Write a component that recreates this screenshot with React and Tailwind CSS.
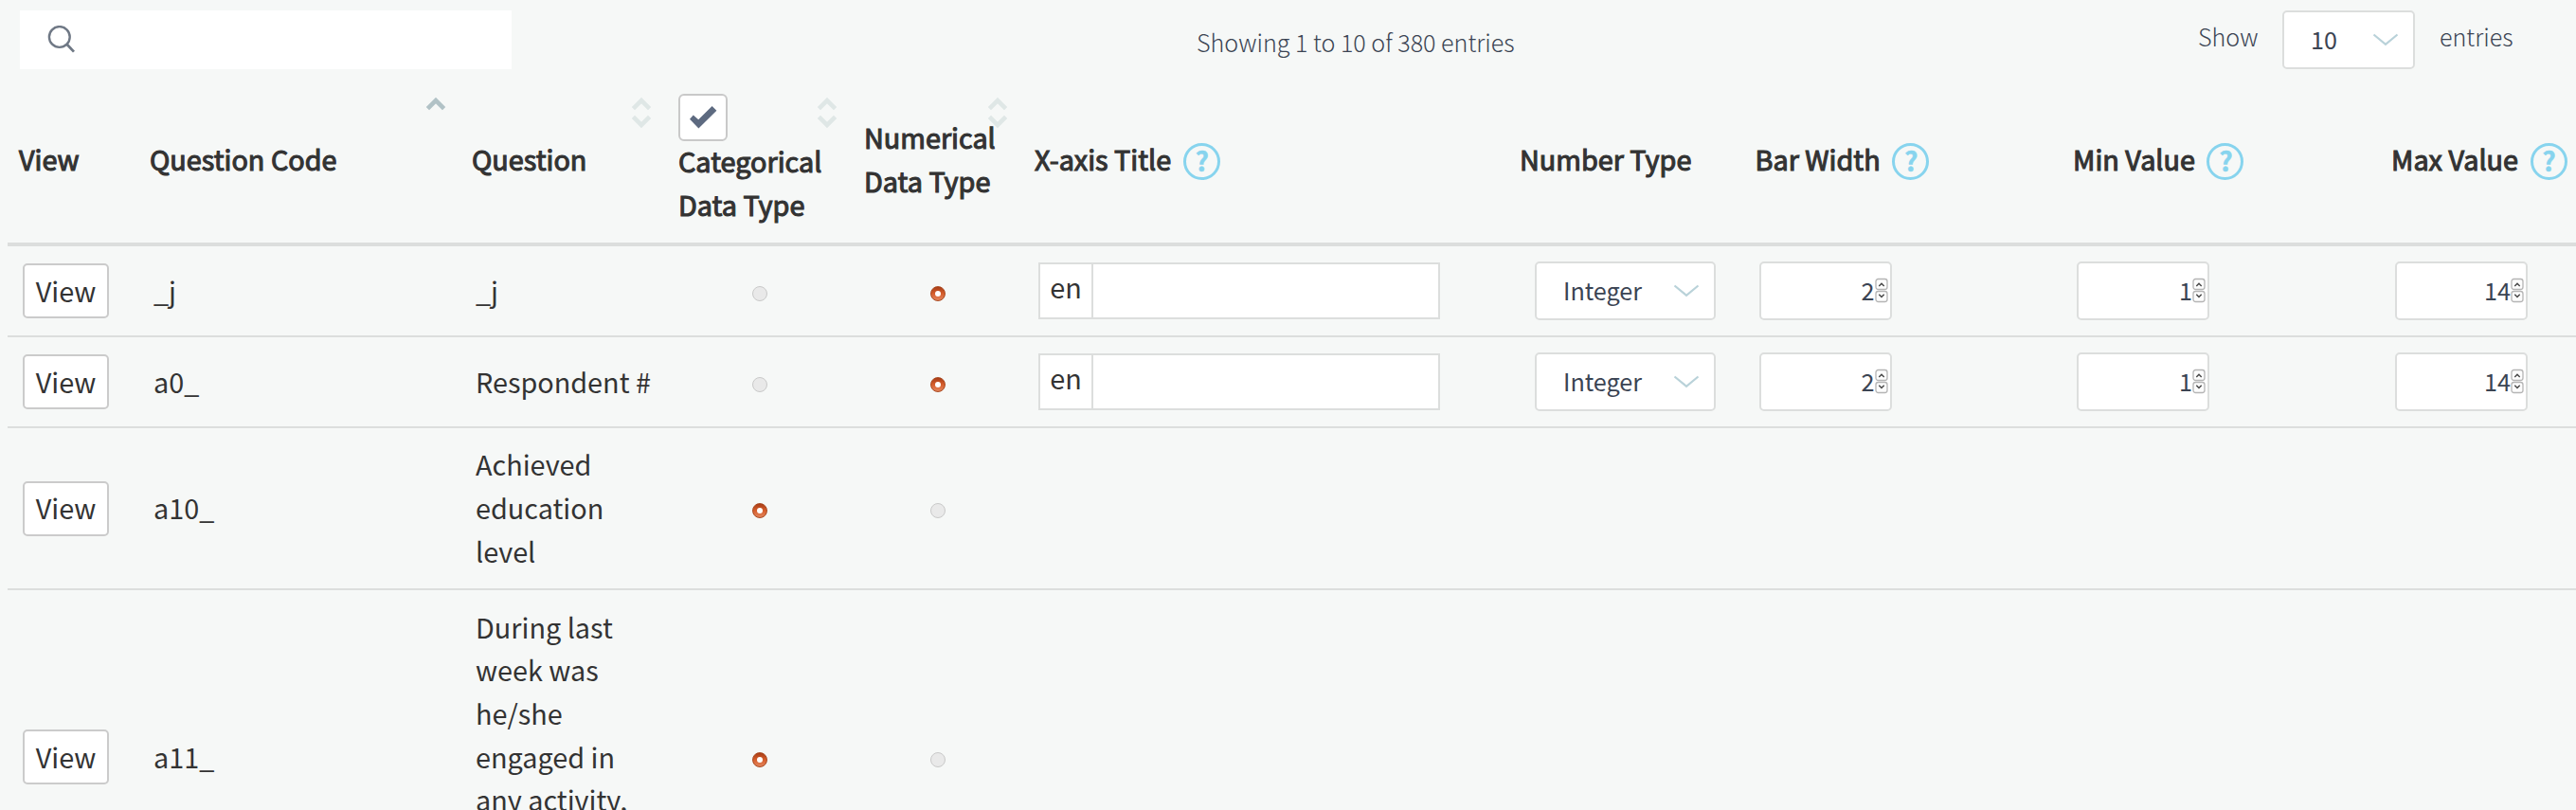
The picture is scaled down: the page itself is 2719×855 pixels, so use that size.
const COLUMNS =
  "grid grid-cols-[138px_340px_218px_196px_180px_512px_248.5px_335.5px_336px_207px] w-[2711px]";

function SortIcon({ direction }) {
  return (
    <svg
      className={
        direction === "asc"
          ? "absolute top-[19px] right-[15px] text-[#b1c2c6]"
          : "absolute top-[19px] right-4 text-[#dfe7e6]"
      }
      width="22"
      height="34"
      viewBox="0 0 22 34"
      fill="none"
      stroke="currentColor"
      strokeWidth="4.6"
    >
      <path d="M2.4 12.6 11 4 19.6 12.6" />
      {direction !== "asc" && <path d="M2.4 21.4 11 30 19.6 21.4" />}
    </svg>
  );
}

function HelpIcon() {
  return (
    <span className="mt-[2px] ml-[12.5px] flex size-[39px] shrink-0 items-center justify-center rounded-full border-3 border-[#87d4ee] pb-[3px] pl-px text-[28px] leading-none font-bold text-[#87d4ee] [-webkit-text-stroke:0.5px_#87d4ee]">
      ?
    </span>
  );
}

function Chevron() {
  return (
    <svg width="28" height="14" viewBox="0 0 28 14" fill="none" stroke="#b9d2d9" strokeWidth="2.2">
      <path d="M1.5 1.5 14 11.8 26.5 1.5" />
    </svg>
  );
}

function HeaderCell({ label, sort, help, children }) {
  return (
    <div className="relative flex items-center pl-3">
      {children}
      {label && <span className="pb-[3px] whitespace-nowrap">{label}</span>}
      {help && <HelpIcon />}
      {sort && <SortIcon direction={sort} />}
    </div>
  );
}

function Radio({ checked }) {
  return (
    <div className="flex items-center justify-center pt-[5px]">
      {checked ? (
        <span className="flex size-4 items-center justify-center rounded-full border border-[#a9481f] bg-linear-to-b from-[#a93d16] via-[#d75f2c] to-[#e2855c]">
          <span className="size-[6px] rounded-full bg-white" />
        </span>
      ) : (
        <span className="size-4 rounded-full border border-[#c9c9c9] bg-[#e9e9e9]" />
      )}
    </div>
  );
}

function Spinner() {
  return (
    <svg width="14" height="28" viewBox="0 0 14 28" fill="#fcfcfc" stroke="#b5b5b5">
      <rect x="1" y="1.5" width="12" height="11" rx="2.5" strokeWidth="1.3" />
      <rect x="1" y="14.5" width="12" height="11" rx="2.5" strokeWidth="1.3" />
      <path d="M4.3 9 7 6.3 9.7 9M4.3 17.8 7 20.5 9.7 17.8" fill="none" stroke="#444" strokeWidth="1.4" />
    </svg>
  );
}

function NumberInput({ value }) {
  return (
    <div className="flex items-center pl-4">
      <div className="flex h-[62px] w-[140px] items-center justify-end rounded-[5px] border-2 border-[#dcdedd] bg-white pr-[2px] text-[25.2px] text-[#3b4453]">
        <span className="pb-px">{value}</span>
        <Spinner />
      </div>
    </div>
  );
}

const ROWS = [
  { code: "_j", question: "_j", numeric: true, height: "h-24" },
  { code: "a0_", question: "Respondent #", numeric: true, height: "h-24" },
  { code: "a10_", question: ["Achieved", "education", "level"], height: "h-[171px]" },
  {
    code: "a11_",
    question: ["During last", "week was", "he/she", "engaged in", "any activity,"],
    height: "h-[354px]",
    tall: true,
  },
];

function Row({ row }) {
  const lines = Array.isArray(row.question) ? row.question : [row.question];
  return (
    <div className={`${COLUMNS} ${row.height} shrink-0 border-b-2 border-[#dcdedd]`}>
      <div className="flex items-center pl-4">
        <button className="flex h-[58px] w-[91px] items-center justify-center rounded-[5px] border-2 border-[#cbcbcb] bg-white pb-px">
          View
        </button>
      </div>
      <div className="flex items-center pb-px pl-4">{row.code}</div>
      <div className="flex items-center pb-px pl-4">
        <div className={row.tall ? "h-80" : ""}>
          {lines.map((line) => (
            <div key={line} className="whitespace-nowrap">
              {line}
            </div>
          ))}
        </div>
      </div>
      <Radio checked={!row.numeric} />
      <Radio checked={row.numeric} />
      {row.numeric && (
        <>
          <div className="flex items-center pl-4">
            <div className="flex h-[60px] w-[424px] border-2 border-[#dcdedd] bg-white">
              <span className="flex w-14 items-center justify-center border-r-2 border-[#dcdedd] pb-[9px]">
                en
              </span>
            </div>
          </div>
          <div className="flex items-center pl-[28px]">
            <div className="flex h-[62px] w-[191px] items-center justify-between rounded-[5px] border-2 border-[#dcdedd] bg-white pr-[15px] pl-[28px] text-[25.2px] text-[#3b4453]">
              <span className="pb-px">Integer</span>
              <Chevron />
            </div>
          </div>
          <NumberInput value="2" />
          <NumberInput value="1" />
          <NumberInput value="14" />
        </>
      )}
    </div>
  );
}

export default function App() {
  return (
    <div className="flex h-[855px] w-[2719px] flex-col overflow-hidden bg-[#f6f8f7] pl-2 font-['Noto_Sans_CJK_SC','Open_Sans',sans-serif] text-[28.8px] leading-[45.7px] text-[#333]">
      <div className="flex h-[83px] shrink-0 pt-[11px] pl-[13px] text-[25.1px] font-light text-[#3b4453]">
        <div className="flex h-[62px] w-[519px] bg-white pt-4 pl-[29px]">
          <svg width="31" height="31" viewBox="0 0 31 31" fill="none" stroke="#6f7885" strokeWidth="2.4">
            <circle cx="12.8" cy="12" r="10.9" />
            <path d="M20.6 19.8 28 27.6" strokeWidth="2.8" />
          </svg>
        </div>
        <span className="ml-[723px] w-[1057px] pt-[11px]">Showing 1 to 10 of 380 entries</span>
        <span className="w-[89px] pt-[5px]">Show</span>
        <div className="flex h-[62px] w-[140px] items-center justify-between rounded-[5px] border-2 border-[#dcdedd] bg-white pr-[15px] pl-[28px] font-normal">
          <span>10</span>
          <Chevron />
        </div>
        <span className="pt-[5px] pl-[26px]">entries</span>
      </div>

      <div className={`${COLUMNS} h-[177px] shrink-0 border-b-4 border-[#dcdedd] [-webkit-text-stroke:1.1px_#333]`}>
        <HeaderCell label="View" />
        <HeaderCell label="Question Code" sort="asc" />
        <HeaderCell label="Question" sort="both" />
        <HeaderCell sort="both">
          <div className="flex flex-col pb-[2px]">
            <span className="flex h-[50px] w-[52px] items-center justify-center rounded-[6px] border-2 border-[#c9c9c9] bg-white">
              <svg width="30" height="26" viewBox="0 0 30 26" fill="#5d6a80">
                <path d="M1 14.8 4.8 10.6 10.2 15.2 24.6 1 29.4 5.8 10.4 24.6Z" />
              </svg>
            </span>
            <span className="-mt-[2px]">Categorical</span>
            <span>Data Type</span>
          </div>
        </HeaderCell>
        <HeaderCell sort="both">
          <div className="flex flex-col pb-[3px]">
            <span>Numerical</span>
            <span>Data Type</span>
          </div>
        </HeaderCell>
        <HeaderCell label="X-axis Title" help />
        <HeaderCell label="Number Type" />
        <HeaderCell label="Bar Width" help />
        <HeaderCell label="Min Value" help />
        <HeaderCell label="Max Value" help />
      </div>

      {ROWS.map((row) => (
        <Row key={row.code} row={row} />
      ))}
    </div>
  );
}
